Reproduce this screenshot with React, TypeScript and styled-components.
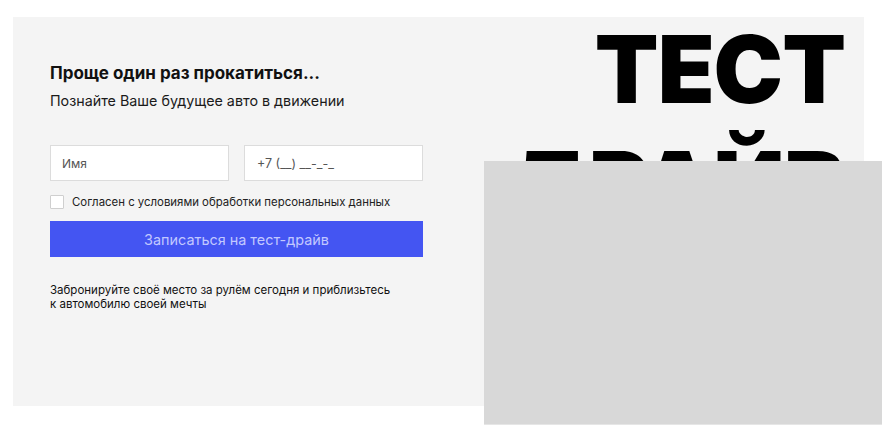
import React from "react";
import styled, { createGlobalStyle } from "styled-components";

const Global = createGlobalStyle`
  html, body { margin: 0; padding: 0; background: #ffffff; }
  body { font-family: Inter, "Noto Sans", sans-serif; color: #111; }
  * { box-sizing: border-box; }
`;

const Page = styled.div`
  position: relative;
  width: 895px;
  height: 443px;
  padding: 17px 0 0 13px;
  overflow: hidden;
`;

const Panel = styled.section`
  width: 851px;
  height: 389px;
  background: #f4f4f4;
  display: flex;
  justify-content: space-between;
`;

const FormColumn = styled.div`
  width: 410px;
  padding: 46px 0 0 37px;
  display: flex;
  flex-direction: column;
`;

const Heading = styled.h2`
  margin: 0;
  font-size: 17px;
  line-height: 21px;
  font-weight: 700;
  color: #111;
`;

const Subtitle = styled.p`
  margin: 8px 0 0;
  font-size: 14.3px;
  line-height: 17px;
  color: #1a1a1a;
`;

const Fields = styled.div`
  margin-top: 36px;
  display: grid;
  grid-template-columns: 179px 179px;
  column-gap: 15px;
`;

const Field = styled.div<{ $pad: number; $size: number }>`
  height: 36px;
  background: #ffffff;
  border: 1px solid #dcdcdc;
  display: flex;
  align-items: center;
  padding-left: ${(p) => p.$pad}px;
  font-size: ${(p) => p.$size}px;
  color: #555;
`;

const ConsentRow = styled.label`
  margin-top: 14px;
  display: flex;
  align-items: center;
  gap: 8px;
  font-size: 11.4px;
  line-height: 14px;
  color: #222;
`;

const Box = styled.span`
  width: 14px;
  height: 14px;
  background: #fff;
  border: 1px solid #cfcfcf;
  border-radius: 1px;
  flex: none;
`;

const Submit = styled.button`
  margin-top: 12px;
  width: 373px;
  height: 36px;
  border: none;
  background: #4455f2;
  color: #c2c8ff;
  font-family: Inter, "Noto Sans", sans-serif;
  font-size: 14.4px;
  padding: 0;
  cursor: pointer;
`;

const Note = styled.p`
  margin: 26px 0 0;
  font-size: 11.5px;
  line-height: 14px;
  color: #111;
`;

const TitleColumn = styled.div`
  padding-right: 19px;
  text-align: right;
`;

const BigTitle = styled.h1`
  margin: -6px 0 0;
  font-size: 93px;
  line-height: 116px;
  font-weight: 900;
  letter-spacing: -1px;
  color: #000;
`;

const Placeholder = styled.div`
  position: absolute;
  left: 484px;
  top: 161px;
  width: 398px;
  height: 264px;
  background: #d8d8d8;
  border-bottom: 1px solid #e6e6e6;
`;

export default function App() {
  return (
    <>
      <Global />
      <Page>
        <Panel>
          <FormColumn>
            <Heading>Проще один раз прокатиться...</Heading>
            <Subtitle>Познайте Ваше будущее авто в движении</Subtitle>
            <Fields>
              <Field $pad={11} $size={12}>Имя</Field>
              <Field $pad={12} $size={12.5}>+7 (__) __-_-_</Field>
            </Fields>
            <ConsentRow>
              <Box />
              Согласен с условиями обработки персональных данных
            </ConsentRow>
            <Submit>Записаться на тест-драйв</Submit>
            <Note>
              Забронируйте своё место за рулём сегодня и приблизьтесь
              <br />к автомобилю своей мечты
            </Note>
          </FormColumn>
          <TitleColumn>
            <BigTitle>
              ТЕСТ
              <br />
              ДРАЙВ
            </BigTitle>
          </TitleColumn>
        </Panel>
        <Placeholder />
      </Page>
    </>
  );
}
